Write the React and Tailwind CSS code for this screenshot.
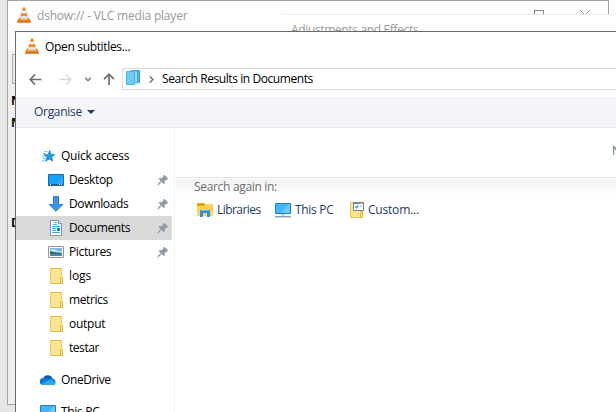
import React from "react";

function Cone() {
  return (
    <svg className="size-4 shrink-0" viewBox="0 0 16 16">
      <path d="M2.800 10.500h10.400l1.800 4.800H1z" fill="#ef8a1c" />
      <path d="M1 14.400h14v1.200H1z" fill="#c4610d" />
      <path d="M7 .5h2l3.400 11q-4.400 2.300-8.800 0z" fill="#e87d14" />
      <path d="M6.100 3.500h3.800l1 3.100H5.100z" fill="#f1f1f1" />
      <path d="M4.400 8.800h7.200l.8 2.600q-4.400 2-8.800 0z" fill="#dcdee1" />
    </svg>
  );
}

function Star() {
  return (
    <svg className="h-4 w-4 shrink-0" viewBox="0 0 16 16">
      <path d="M8.700 2.500l1.200 3.800 4 .1-3.200 2.600 1 4.200-3.400-2.300-3.700 2.400 1.400-4.200-3-2.400h4.100z" fill="#1b9be8" stroke="#1577bd" strokeWidth=".7" />
      <path d="M3.500 3.500h3M2 5.500h3M1 8h3M1.500 10.300h3M1 12.500h2.500" stroke="#6fc3f2" />
    </svg>
  );
}

function Desktop() {
  return (
    <svg className="size-4 shrink-0" viewBox="0 0 16 16">
      <path d="M.5 2.500h15v11H.5z" fill="#18a0fb" stroke="#176da8" />
      <path d="M9 12L15 5v7z" fill="#35acfb" />
      <path d="M1 12h14v1H1z" fill="#0e5c99" />
      <path d="M2 12.500h1M11 12.500h1M13 12.500h1" stroke="#fff" />
    </svg>
  );
}

function Downloads() {
  return (
    <svg className="size-4 shrink-0" viewBox="0 0 16 16">
      <path d="M5.500.5h5v8h4.300L8 15.300 1.200 8.500h4.300z" fill="#3d96e3" stroke="#2b7cc4" />
    </svg>
  );
}

function Documents() {
  return (
    <svg className="size-4 shrink-0" viewBox="0 0 16 16">
      <path d="M2.500.5h8l3 3v12h-11z" fill="#fff" stroke="#8c9296" />
      <path d="M10.500.5v3h3" fill="#eee" stroke="#8c9296" />
      <path d="M6 2.500h3M5 4.500h4M4 6.500h8M4 8.500h4M4 10.500h4M4 12.500h8" stroke="#4aa9e4" />
      <path d="M9 8h3v3H9z" fill="#51738d" />
    </svg>
  );
}

function Pictures() {
  return (
    <svg className="size-4 shrink-0" viewBox="0 0 16 16">
      <path d="M.5 2.500h15v11H.5z" fill="#fff" stroke="#949494" />
      <path d="M2 4h12v8H2z" fill="#76b8ea" />
      <path d="M2 6q4-2 6 0t6 1v2H2z" fill="#c5e3f4" />
      <path d="M2 7l4 1 8 1v1.500H2z" fill="#3d6860" />
      <path d="M2 10h12v2H2z" fill="#4d87ad" />
    </svg>
  );
}

function Folder() {
  return (
    <svg className="size-4 shrink-0" viewBox="0 0 16 16">
      <path d="M2.500.5h11v15h-11z" fill="#ffe591" stroke="#ebc44c" />
      <path d="M12.500 9.500h2v6h-2z" fill="#ffe591" stroke="#e3b93f" />
    </svg>
  );
}

function Cloud() {
  return (
    <svg className="size-4 shrink-0" viewBox="0 0 16 16">
      <path d="M3 7a5 5 0 0 1 9.500-.7L10 10H3z" fill="#0b5cad" />
      <path d="M3.500 6Q7 5 10 8l-4 5H3A3.500 3.500 0 0 1 3.500 6z" fill="#0a78d4" />
      <path d="M9 8q1-2 3.500-1.700a3.500 3.500 0 0 1 1 6.700z" fill="#1490df" />
      <path d="M1.500 12L10 7.500l5.500 4q-.6 1.500-2.500 1.500H3z" fill="#28a8ea" />
    </svg>
  );
}

function Computer() {
  return (
    <svg className="size-4 shrink-0" viewBox="0 0 16 16">
      <path d="M.5 1.500h15v10H.5z" fill="#43b5fb" stroke="#2380ba" />
      <path d="M6 11L14 2h1v9z" fill="#6bc8ff" />
      <path d="M6 12h4v1.500H6z" fill="#b5c3cc" />
      <path d="M0 14.500h16" stroke="#8aa0ae" />
      <path d="M0 15.500h16" stroke="#ccd5da" />
    </svg>
  );
}

function Libraries() {
  return (
    <svg className="size-4 shrink-0" viewBox="0 0 16 16">
      <path d="M0 1h7l1 1h8v12H0z" fill="#ffd35a" />
      <path d="M0 1h7l1 1v2H0z" fill="#e5a318" />
      <path d="M3 8h10v7h-3v-4H6v4H3z" fill="#2c94df" />
      <path d="M4 8h8v1H4z" fill="#65bdf3" />
    </svg>
  );
}

function Custom() {
  return (
    <svg className="size-4 shrink-0" viewBox="0 0 16 16">
      <path d="M1.500.5h12v15h-12z" fill="#ffe591" stroke="#ebc44c" />
      <path d="M11.500 9.500h2v6h-2z" fill="#ffe591" stroke="#e3b93f" />
      <path d="M4.500.5h10v8h-10z" fill="#fff" stroke="#7e878d" />
      <path d="M4 1h11" stroke="#7e878d" strokeWidth="2" />
      <path d="M12 1.500h1" stroke="#fff" />
      <path d="M6 4.500l1.500 1.200L9.500 3.500" fill="none" stroke="#3a9be6" strokeWidth="1.400" />
      <path d="M11 4.500h2" stroke="#b4bcc2" />
    </svg>
  );
}

function SearchResults() {
  return (
    <svg className="h-[15px] w-4 shrink-0" viewBox="0 0 16 15">
      <path d="M6.500.5h8v12h-8z" fill="#4ab5ec" stroke="#2f9fdd" />
      <path d="M4.500 1h8v12h-8z" fill="#8fd9fa" stroke="#43aee6" />
      <path d="M1.500 1.500h8v13h-8z" fill="#6fcbf8" stroke="#4fb5e8" />
    </svg>
  );
}

function Pin() {
  return (
    <svg className="size-3 shrink-0" viewBox="0 0 12 12">
      <path d="M7.300.8l4 4-1 .7-.8-.1-2 2 .3 1.900-.9.9-5.300-5.300.9-.9 2 .2 2-2-.1-.8z" fill="#8f9ba5" />
      <path d="M4 7.500L.8 11" stroke="#8f9ba5" strokeWidth="1.200" />
    </svg>
  );
}

function Back() {
  return (
    <svg className="h-3 w-[13px]" viewBox="0 0 13 12" fill="none" stroke="#6e6e6e" strokeWidth="1.700">
      <path d="M12.500 6.500H1.500M6 1.500L1.200 6.500 6 11.500" />
    </svg>
  );
}

function Forward() {
  return (
    <svg className="block h-3 w-[13px]" viewBox="0 0 13 12" fill="none" stroke="#d6d6d6" strokeWidth="1.300">
      <path d="M.5 6.500h11M7 1.500l4.800 5L7 11.500" />
    </svg>
  );
}

const items = [
  { label: "Desktop", icon: Desktop, pinned: true, tracking: "tracking-[-0.35px]" },
  { label: "Downloads", icon: Downloads, pinned: true, tracking: "tracking-[-0.35px]" },
  { label: "Documents", icon: Documents, pinned: true, selected: true, tracking: "tracking-[-0.35px]" },
  { label: "Pictures", icon: Pictures, pinned: true, tracking: "tracking-[-0.35px]" },
  { label: "logs", icon: Folder, tracking: "tracking-[-0.1px]" },
  { label: "metrics", icon: Folder, tracking: "tracking-[-0.4px]" },
  { label: "output", icon: Folder, tracking: "tracking-[-0.25px]" },
  { label: "testar", icon: Folder, tracking: "tracking-[-0.45px]" },
];

function Player() {
  return (
    <div className="absolute left-[7px] top-0 flex h-[405px] w-[602px] flex-col border border-[#a3a3a3] bg-[#f0f0f0]">
      <div className="flex h-[50px] shrink-0 items-start bg-white pl-[8px] pt-[6px] text-[#999]">
        <Cone />
        <span className="ml-[5px] leading-[18px] tracking-[-0.2px]">dshow:// - VLC media player</span>
        <div className="ml-auto flex gap-[36px] pr-[18px] pt-[3px]">
          <div className="size-[10px] border border-[#888]" />
          <svg className="size-[10px]" viewBox="0 0 10 10"><path d="M0 0l10 10M10 0L0 10" stroke="#888" /></svg>
        </div>
      </div>
      <div className="ml-[4px] mt-[3px] h-[30px] w-[80px] shrink-0 border border-[#adadad] bg-[#e8e8e8]" />
      <div className="flex flex-col pl-[3px] font-bold leading-[22px]">
        <span className="mt-[6px]">N</span>
        <span>N</span>
        <span className="mt-[78px]">D</span>
      </div>
      <div className="ml-[7px] mt-[159px] h-[6px] w-2 bg-[#111]" />
    </div>
  );
}

function Effects() {
  return (
    <div className="absolute left-[282px] top-[14px] h-[60px] w-[334px] border-t border-[#ededed] bg-white pl-[9px] pt-[6px] leading-[18px] text-[#999]">
      <span className="tracking-[-0.35px]">Adjustments and Effects</span>
    </div>
  );
}

function Sidebar() {
  return (
    <div className="flex w-[159px] shrink-0 flex-col border-r border-[#f0f0f0] pt-4">
      <div className="flex h-6 shrink-0 items-center gap-1 pl-[25px]">
        <Star /><span className="tracking-[-0.25px]">Quick access</span>
      </div>
      {items.map(({ label, icon: Icon, pinned, selected, tracking }) => (
        <div key={label} className={`flex h-6 w-[156px] shrink-0 items-center pl-8 pr-[3px] ${selected ? "bg-[#d9d9d9]" : ""}`}>
          <Icon />
          <span className={`ml-[5px] ${tracking}`}>{label}</span>
          {pinned && <span className="ml-auto"><Pin /></span>}
        </div>
      ))}
      <div className="mt-2 flex h-6 shrink-0 items-center gap-[5px] pl-6"><Cloud /><span className="tracking-[-0.4px]">OneDrive</span></div>
      <div className="mt-2 flex h-6 shrink-0 items-center gap-[5px] pl-6"><Computer /><span className="tracking-[-0.3px]">This PC</span></div>
    </div>
  );
}

function Results() {
  return (
    <div className="flex min-w-0 flex-1 flex-col pl-px">
      <div className="flex h-[50px] shrink-0 justify-end border-b border-[#e3e3e3] pt-[14px] leading-[18px] text-[#6d6d6d]">
        <span className="w-[4px] overflow-hidden">N</span>
      </div>
      <div className="mt-px h-[15px] shrink-0 bg-linear-to-b from-[#f1f1f1] to-white pl-[18px] leading-[16px] tracking-[-0.32px] text-[#6d6d6d]">Search again in:</div>
      <div className="mt-[7px] flex items-center pl-[21px] text-[#1e3a68]">
        <div className="flex w-[78px] items-center gap-1"><Libraries /><span className="tracking-[-0.55px]">Libraries</span></div>
        <div className="flex w-[74px] items-center gap-1"><Computer /><span className="tracking-[-0.3px]">This PC</span></div>
        <div className="flex items-center gap-[3px]"><Custom /><span className="tracking-[-0.2px]">Custom...</span></div>
      </div>
    </div>
  );
}

function Dialog() {
  return (
    <div className="absolute left-[15px] top-[31px] flex h-[381px] w-[601px] flex-col overflow-hidden border-l border-t border-[#6b6b6b] bg-white text-black">
      <div className="flex h-[36px] shrink-0 items-start pl-2 pt-[6px]">
        <Cone /><span className="ml-[5px] leading-[18px] tracking-[-0.33px]">Open subtitles...</span>
      </div>
      <div className="flex h-[22px] shrink-0 items-center pl-[13px]">
        <Back />
        <span className="ml-[17px]"><Forward /></span>
        <svg className="ml-[13px] h-[5px] w-[6px]" viewBox="0 0 6 5" fill="none" stroke="#777" strokeWidth="1.400"><path d="M.3.8L3 3.700 5.700.8" /></svg>
        <svg className="ml-[12px] h-[12px] w-3" viewBox="0 0 12 12" fill="none" stroke="#6e6e6e" strokeWidth="1.700"><path d="M6 12V1.500M1 6.200L6 1.200l5 5" /></svg>
        <div className="ml-[7px] flex h-[22px] flex-1 items-center border-y border-l border-[#d9d9d9] pl-[2px]">
          <span className="-mt-1"><SearchResults /></span>
          <svg className="ml-[8px] h-[7px] w-[5px]" viewBox="0 0 5 7" fill="none" stroke="#666" strokeWidth="1.300"><path d="M.8.6L4 3.500.8 6.400" /></svg>
          <span className="ml-[8px] tracking-[-0.42px]">Search Results in Documents</span>
        </div>
      </div>
      <div className="mt-[7px] flex h-[31px] shrink-0 items-center gap-[5px] border-b border-[#e7e9ec] bg-[#f4f5f8] pl-[18px] text-[#1e3a68]">
        <span className="tracking-[-0.3px]">Organise</span>
        <svg className="h-[4px] w-[8px]" viewBox="0 0 8 4"><path d="M0 0h8L4 4z" fill="#1e3a68" /></svg>
      </div>
      <div className="flex min-h-0 flex-1"><Sidebar /><Results /></div>
    </div>
  );
}

export default function App() {
  return (
    <div className="relative h-[412px] w-[616px] overflow-hidden whitespace-nowrap bg-[#e6e6e6] font-['Open_Sans',sans-serif] text-[12px] leading-[18px]">
      <div className="ml-[609px] h-[31px] bg-white" />
      <Player />
      <Effects />
      <Dialog />
    </div>
  );
}
